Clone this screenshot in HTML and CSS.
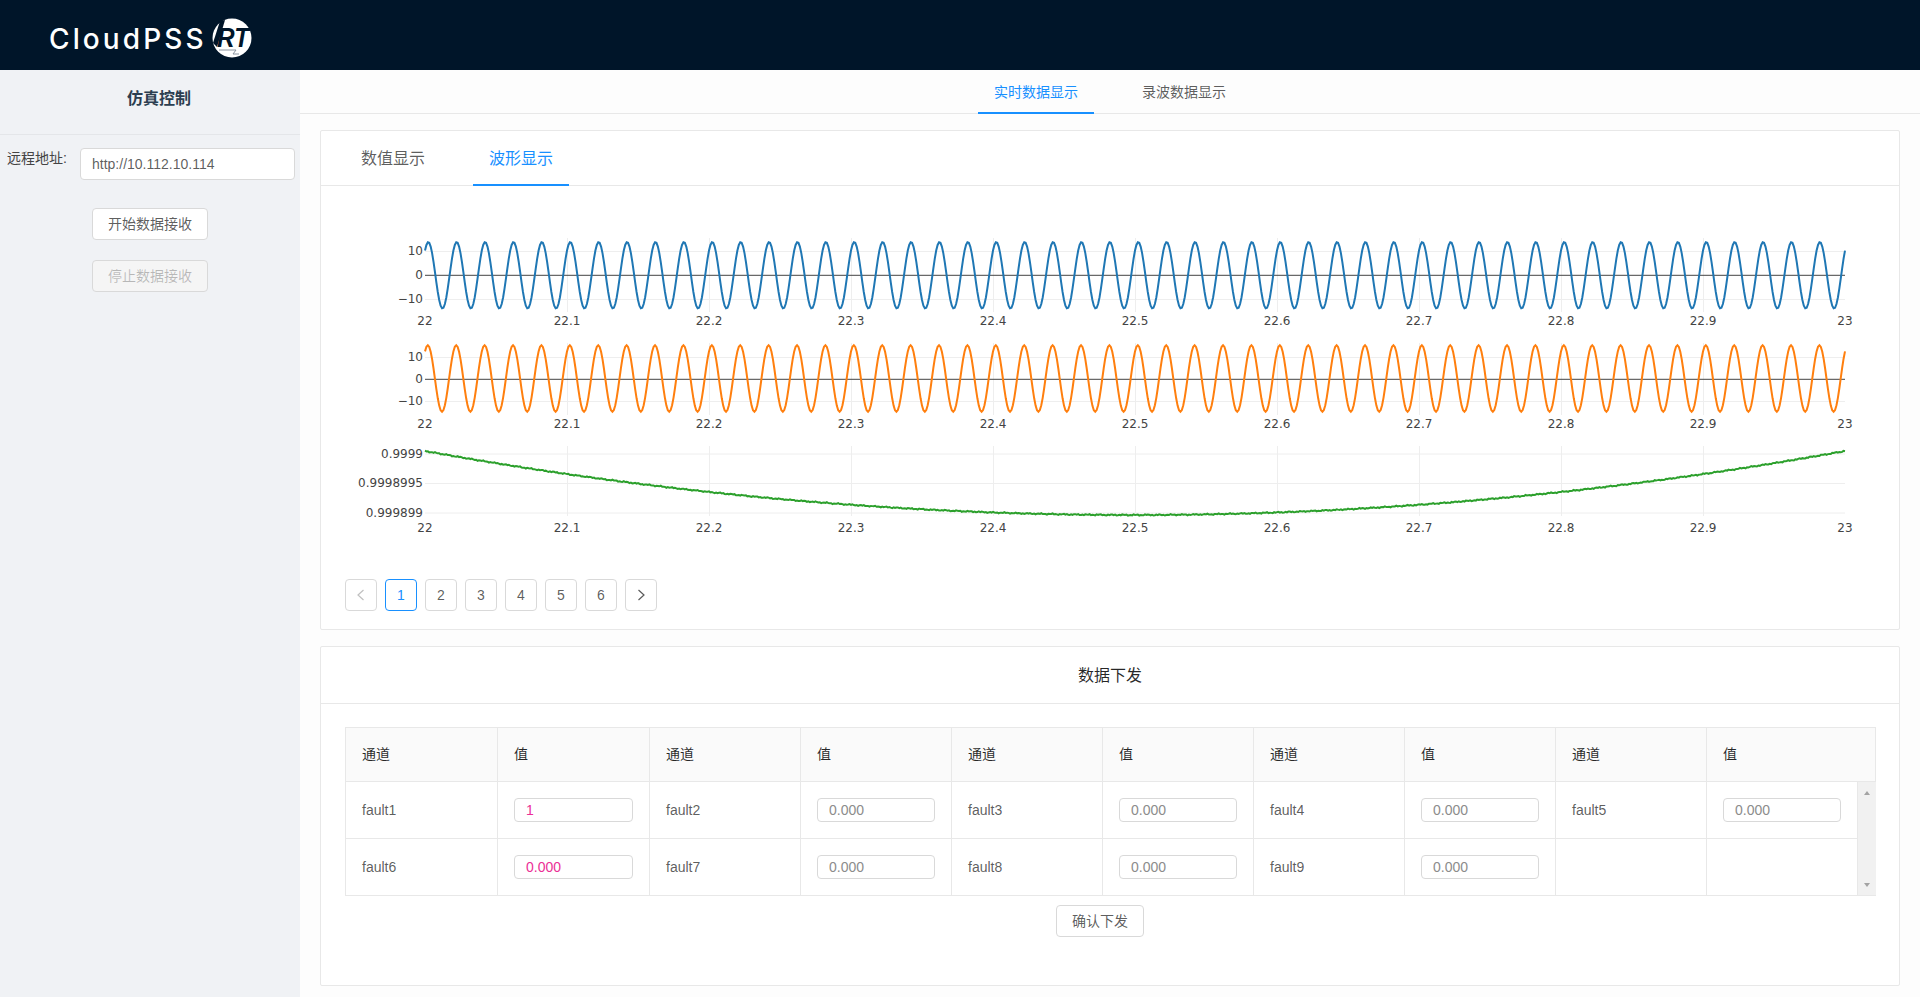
FILE: index.html
```html
<!DOCTYPE html>
<html lang="zh-CN">
<head>
  <meta charset="UTF-8" />
  <meta name="viewport" content="width=device-width, initial-scale=1.0" />
  <title>CloudPSS RT</title>
  <link rel="stylesheet" href="styles.css">
</head>
<body>
  <header class="topbar">
    <span class="logo-text">CloudPSS</span>
    <svg class="logo-badge" width="42" height="42" viewBox="0 0 42 42">
      <circle cx="21" cy="21" r="19.5" fill="#fff" />
      <path d="M9 4 L2 26 L6 30 L14 3 Z" fill="#001529" />
      <text class="logo-rt" x="6" y="30" textLength="32" lengthAdjust="spacingAndGlyphs">RT</text>
      <path d="M8 33 H25 L22 37 H28" fill="none" stroke="#8a94a0" stroke-width="1" />
    </svg>
  </header>

  <div class="layout">
    <aside class="sidebar">
      <h2 class="side-title">仿真控制</h2>
      <div class="side-row">
        <label class="side-label" for="remote">远程地址:</label>
        <input class="text-input side-input" id="remote" type="text" value="http://10.112.10.114" />
      </div>
      <button class="btn side-btn" type="button">开始数据接收</button>
      <button class="btn side-btn" type="button" disabled>停止数据接收</button>
    </aside>

    <main class="content">
      <nav class="page-tabs">
        <a class="page-tab active">实时数据显示</a>
        <a class="page-tab">录波数据显示</a>
      </nav>

      <div class="panels">
        <section class="card wave-card">
          <div class="card-tabs">
            <a class="card-tab">数值显示</a>
            <a class="card-tab active">波形显示</a>
          </div>
          <svg id="plots" class="plots" width="1578" height="373" viewBox="321 186 1578 373"></svg>
          <ul class="pager">
            <li class="page-item disabled">
              <svg width="12" height="12" viewBox="0 0 12 12"><path d="M8.5 1 L3 6 L8.5 11" /></svg>
            </li>
            <li class="page-item current">1</li>
            <li class="page-item">2</li>
            <li class="page-item">3</li>
            <li class="page-item">4</li>
            <li class="page-item">5</li>
            <li class="page-item">6</li>
            <li class="page-item">
              <svg width="12" height="12" viewBox="0 0 12 12"><path d="M3.5 1 L9 6 L3.5 11" /></svg>
            </li>
          </ul>
        </section>

        <section class="card send-card">
          <h3 class="card-head">数据下发</h3>
          <div class="card-body">
            <table class="send-table">
              <colgroup>
                <col class="col-first" /><col class="col-first" /><col class="col-data" /><col class="col-data" /><col class="col-data" />
                <col class="col-data" /><col class="col-data" /><col class="col-data" /><col class="col-data" /><col class="col-data" />
                <col class="col-bar" />
              </colgroup>
              <thead>
                <tr>
                  <th>通道</th><th>值</th><th>通道</th><th>值</th><th>通道</th><th>值</th><th>通道</th><th>值</th><th>通道</th><th class="no-line">值</th><th></th>
                </tr>
              </thead>
              <tbody>
                <tr>
                  <td>fault1</td><td><input class="text-input cell-input changed" type="text" value="1" /></td>
                  <td>fault2</td><td><input class="text-input cell-input" type="text" value="0.000" /></td>
                  <td>fault3</td><td><input class="text-input cell-input" type="text" value="0.000" /></td>
                  <td>fault4</td><td><input class="text-input cell-input" type="text" value="0.000" /></td>
                  <td>fault5</td><td><input class="text-input cell-input" type="text" value="0.000" /></td>
                  <td class="scroll-cell" rowspan="2">
                    <div class="scroll-track"><span class="arrow-up"></span><span class="arrow-down"></span></div>
                  </td>
                </tr>
                <tr>
                  <td>fault6</td><td><input class="text-input cell-input changed" type="text" value="0.000" /></td>
                  <td>fault7</td><td><input class="text-input cell-input" type="text" value="0.000" /></td>
                  <td>fault8</td><td><input class="text-input cell-input" type="text" value="0.000" /></td>
                  <td>fault9</td><td><input class="text-input cell-input" type="text" value="0.000" /></td>
                  <td></td><td></td>
                </tr>
              </tbody>
            </table>
            <button class="btn send-btn" type="button">确认下发</button>
          </div>
        </section>
      </div>
    </main>
  </div>

  <script src="script.js"></script>
</body>
</html>
```

FILE: styles.css
```css
* {
  box-sizing: border-box;
}
body {
  margin: 0;
  height: 100vh;
  display: flex;
  flex-direction: column;
  overflow: hidden;
  font-family: "Liberation Sans", "Noto Sans CJK SC", sans-serif;
  font-size: 14px;
  line-height: 22px;
  color: rgba(0,0,0,0.65);
  background: #fdfdfd;
}

/* header */
.topbar {
  height: 70px;
  flex: none;
  display: flex;
  align-items: center;
  padding-left: 49px;
  background: #001529;
}
.logo-text {
  font-family: Inter, sans-serif;
  font-size: 28px;
  font-weight: 500;
  letter-spacing: 3.1px;
  color: #fff;
  margin-top: 8px;
}
.logo-badge {
  margin-left: 4px;
  margin-top: 6px;
}
.logo-rt {
  font-family: "Liberation Sans", sans-serif;
  font-size: 27px;
  font-weight: bold;
  font-style: italic;
  fill: #001529;
}

.layout {
  flex: 1;
  display: flex;
  min-height: 0;
}

/* left side */
.sidebar {
  width: 300px;
  flex: none;
  background: #f0f2f5;
}
.side-title {
  margin: 0;
  height: 65px;
  padding: 18px 0 0 18px;
  text-align: center;
  font-size: 16px;
  line-height: 22px;
  font-weight: bold;
  color: #2c3e50;
  border-bottom: 1px solid #e4e6e9;
}
.side-row {
  display: flex;
  padding: 13px 5px 0 7px;
}
.side-label {
  width: 73px;
  margin-top: -1px;
  color: #444;
}
.side-input {
  width: 215px;
}
.btn {
  display: block;
  height: 32px;
  padding: 0 15px 2px;
  font-family: inherit;
  font-size: 14px;
  color: rgba(0,0,0,0.65);
  background: #fff;
  border: 1px solid #d9d9d9;
  border-radius: 4px;
  cursor: pointer;
}
.btn:disabled {
  color: rgba(0,0,0,0.25);
  background: #f5f5f5;
  cursor: not-allowed;
}
.side-btn {
  width: 116px;
  margin: 28px 0 -8px 92px;
}
.text-input {
  height: 32px;
  padding: 4px 11px;
  font-family: inherit;
  font-size: 14px;
  color: rgba(0,0,0,0.65);
  background: #fff;
  border: 1px solid #d9d9d9;
  border-radius: 4px;
  outline: none;
}

/* main part */
.content {
  flex: 1;
  min-width: 0;
}
.page-tabs {
  height: 44px;
  display: flex;
  justify-content: center;
  gap: 32px;
  border-bottom: 1px solid #e8e8e8;
}
.page-tab {
  height: 44px;
  width: 116px;
  padding-top: 11px;
  text-align: center;
  border-bottom: 2px solid transparent;
}
.page-tab.active {
  color: #1890ff;
  border-bottom-color: #1890ff;
}
.panels {
  padding: 16px 20px 0;
}
.card {
  background: #fff;
  border: 1px solid #e8e8e8;
  border-radius: 2px;
}
.wave-card {
  height: 500px;
  margin-bottom: 16px;
}
.card-tabs {
  height: 55px;
  display: flex;
  gap: 32px;
  padding-left: 24px;
  border-bottom: 1px solid #e8e8e8;
}
.card-tab {
  width: 96px;
  height: 55px;
  padding-top: 17px;
  text-align: center;
  font-size: 16px;
  border-bottom: 2px solid transparent;
}
.card-tab.active {
  color: #1890ff;
  border-bottom-color: #1890ff;
}
.plots {
  display: block;
}
.plots text {
  font-family: "DejaVu Sans", sans-serif;
  font-size: 12px;
  fill: #444;
}
.pager {
  list-style: none;
  display: flex;
  gap: 8px;
  margin: 20px 0 0 24px;
  padding: 0;
}
.page-item {
  width: 32px;
  height: 32px;
  display: flex;
  align-items: center;
  justify-content: center;
  border: 1px solid #d9d9d9;
  border-radius: 4px;
}
.page-item svg path {
  fill: none;
  stroke: rgba(0,0,0,0.65);
  stroke-width: 1.2;
}
.page-item.disabled svg path {
  stroke: rgba(0,0,0,0.25);
}
.page-item.current {
  color: #1890ff;
  border-color: #1890ff;
}

/* data table */
.send-card {
  height: 340px;
}
.card-head {
  margin: 0;
  height: 57px;
  padding-top: 18px;
  text-align: center;
  font-size: 16px;
  line-height: 22px;
  font-weight: normal;
  color: rgba(0,0,0,0.85);
  border-bottom: 1px solid #e8e8e8;
}
.card-body {
  padding: 23px 24px 0;
}
.send-table {
  width: 1530px;
  table-layout: fixed;
  border-collapse: collapse;
}
.col-first {
  width: 152px;
}
.col-data {
  width: 151px;
}
.col-bar {
  width: 18px;
}
.send-table th,
.send-table td {
  padding: 0 16px;
  text-align: left;
  font-weight: normal;
  border: 1px solid #e8e8e8;
}
.send-table th {
  height: 54px;
  padding-bottom: 2px;
  color: rgba(0,0,0,0.85);
  background: #fafafa;
}
.send-table td {
  height: 57px;
}
.send-table th.no-line {
  border-right: none;
}
.send-table th:last-child {
  padding: 0;
  border-left: none;
}
.send-table td.scroll-cell {
  padding: 0;
  border: none;
  border-bottom: 1px solid #e8e8e8;
  background: #f1f1f1;
}
.scroll-track {
  height: 112px;
  display: flex;
  flex-direction: column;
  align-items: center;
  justify-content: space-between;
  padding: 8px 0;
}
.arrow-up,
.arrow-down {
  width: 0;
  height: 0;
  border-left: 3.5px solid transparent;
  border-right: 3.5px solid transparent;
}
.arrow-up {
  border-bottom: 4px solid #a3a3a3;
}
.arrow-down {
  border-top: 4px solid #a3a3a3;
}
.cell-input {
  display: block;
  width: 100%;
  height: 24px;
  padding: 1px 11px;
  color: #8c8c8c;
}
.cell-input.changed {
  color: #eb2f96;
}
.send-btn {
  width: 88px;
  margin: 9px 0 0 711px;
}
```

FILE: script.js
```javascript
const X0 = 425;
const PX_PER_TICK = 142;
const X1 = X0 + 10 * PX_PER_TICK;

const plots = [
  {
    color: '#1f77b4',
    top: 238, bottom: 312, labelY: 325,
    yTicks: [['10', 251.5], ['0', 275.3, true], ['\u221210', 299.5]],
    curve: x => 275.3 - 33.2 * Math.cos((x - 428.3) * 2 * Math.PI / 28.4)
  },
  {
    color: '#ff7f0e',
    top: 343, bottom: 415, labelY: 428,
    yTicks: [['10', 357.5], ['0', 379.3, true], ['\u221210', 401.5]],
    curve: x => 378.5 - 33.3 * Math.cos((x - 427.8) * 2 * Math.PI / 28.4)
  },
  {
    color: '#2ca02c',
    top: 446, bottom: 516, labelY: 532,
    yTicks: [['0.9999', 454], ['0.9998995', 483.5], ['0.999899', 513]],
    curve: x => {
      const t = (x - 1135) / 710;
      return 515 - 64 * t * t + 0.4 * Math.sin(x * 1.7) + 0.3 * Math.sin(x * 0.53);
    }
  }
];

const svg = document.getElementById('plots');
let markup = '';

function line(x1, y1, x2, y2, stroke) {
  return `<line x1="${x1}" y1="${y1}" x2="${x2}" y2="${y2}" stroke="${stroke}" stroke-width="1" />`;
}

for (const plot of plots) {
  // vertical grid and x labels
  for (let i = 0; i <= 10; i++) {
    const x = X0 + i * PX_PER_TICK;
    if (i > 0 && i < 10) {
      markup += line(x + 0.5, plot.top, x + 0.5, plot.bottom, '#eee');
    }
    const label = i === 0 ? '22' : i === 10 ? '23' : (22 + i / 10).toFixed(1);
    markup += `<text x="${x}" y="${plot.labelY}" text-anchor="middle">${label}</text>`;
  }

  // horizontal grid and y labels
  for (const [label, y, isZero] of plot.yTicks) {
    markup += line(X0, y, X1, y, isZero ? '#444' : '#eee');
    markup += `<text x="423" y="${y + 3.5}" text-anchor="end">${label}</text>`;
  }

  const points = [];
  for (let i = 0; i <= 1000; i++) {
    const x = X0 + i * 1.42;
    points.push(x.toFixed(2) + ',' + plot.curve(x).toFixed(2));
  }
  markup += `<polyline points="${points.join(' ')}" fill="none" stroke="${plot.color}" stroke-width="2" />`;
}

svg.innerHTML = markup;
```
